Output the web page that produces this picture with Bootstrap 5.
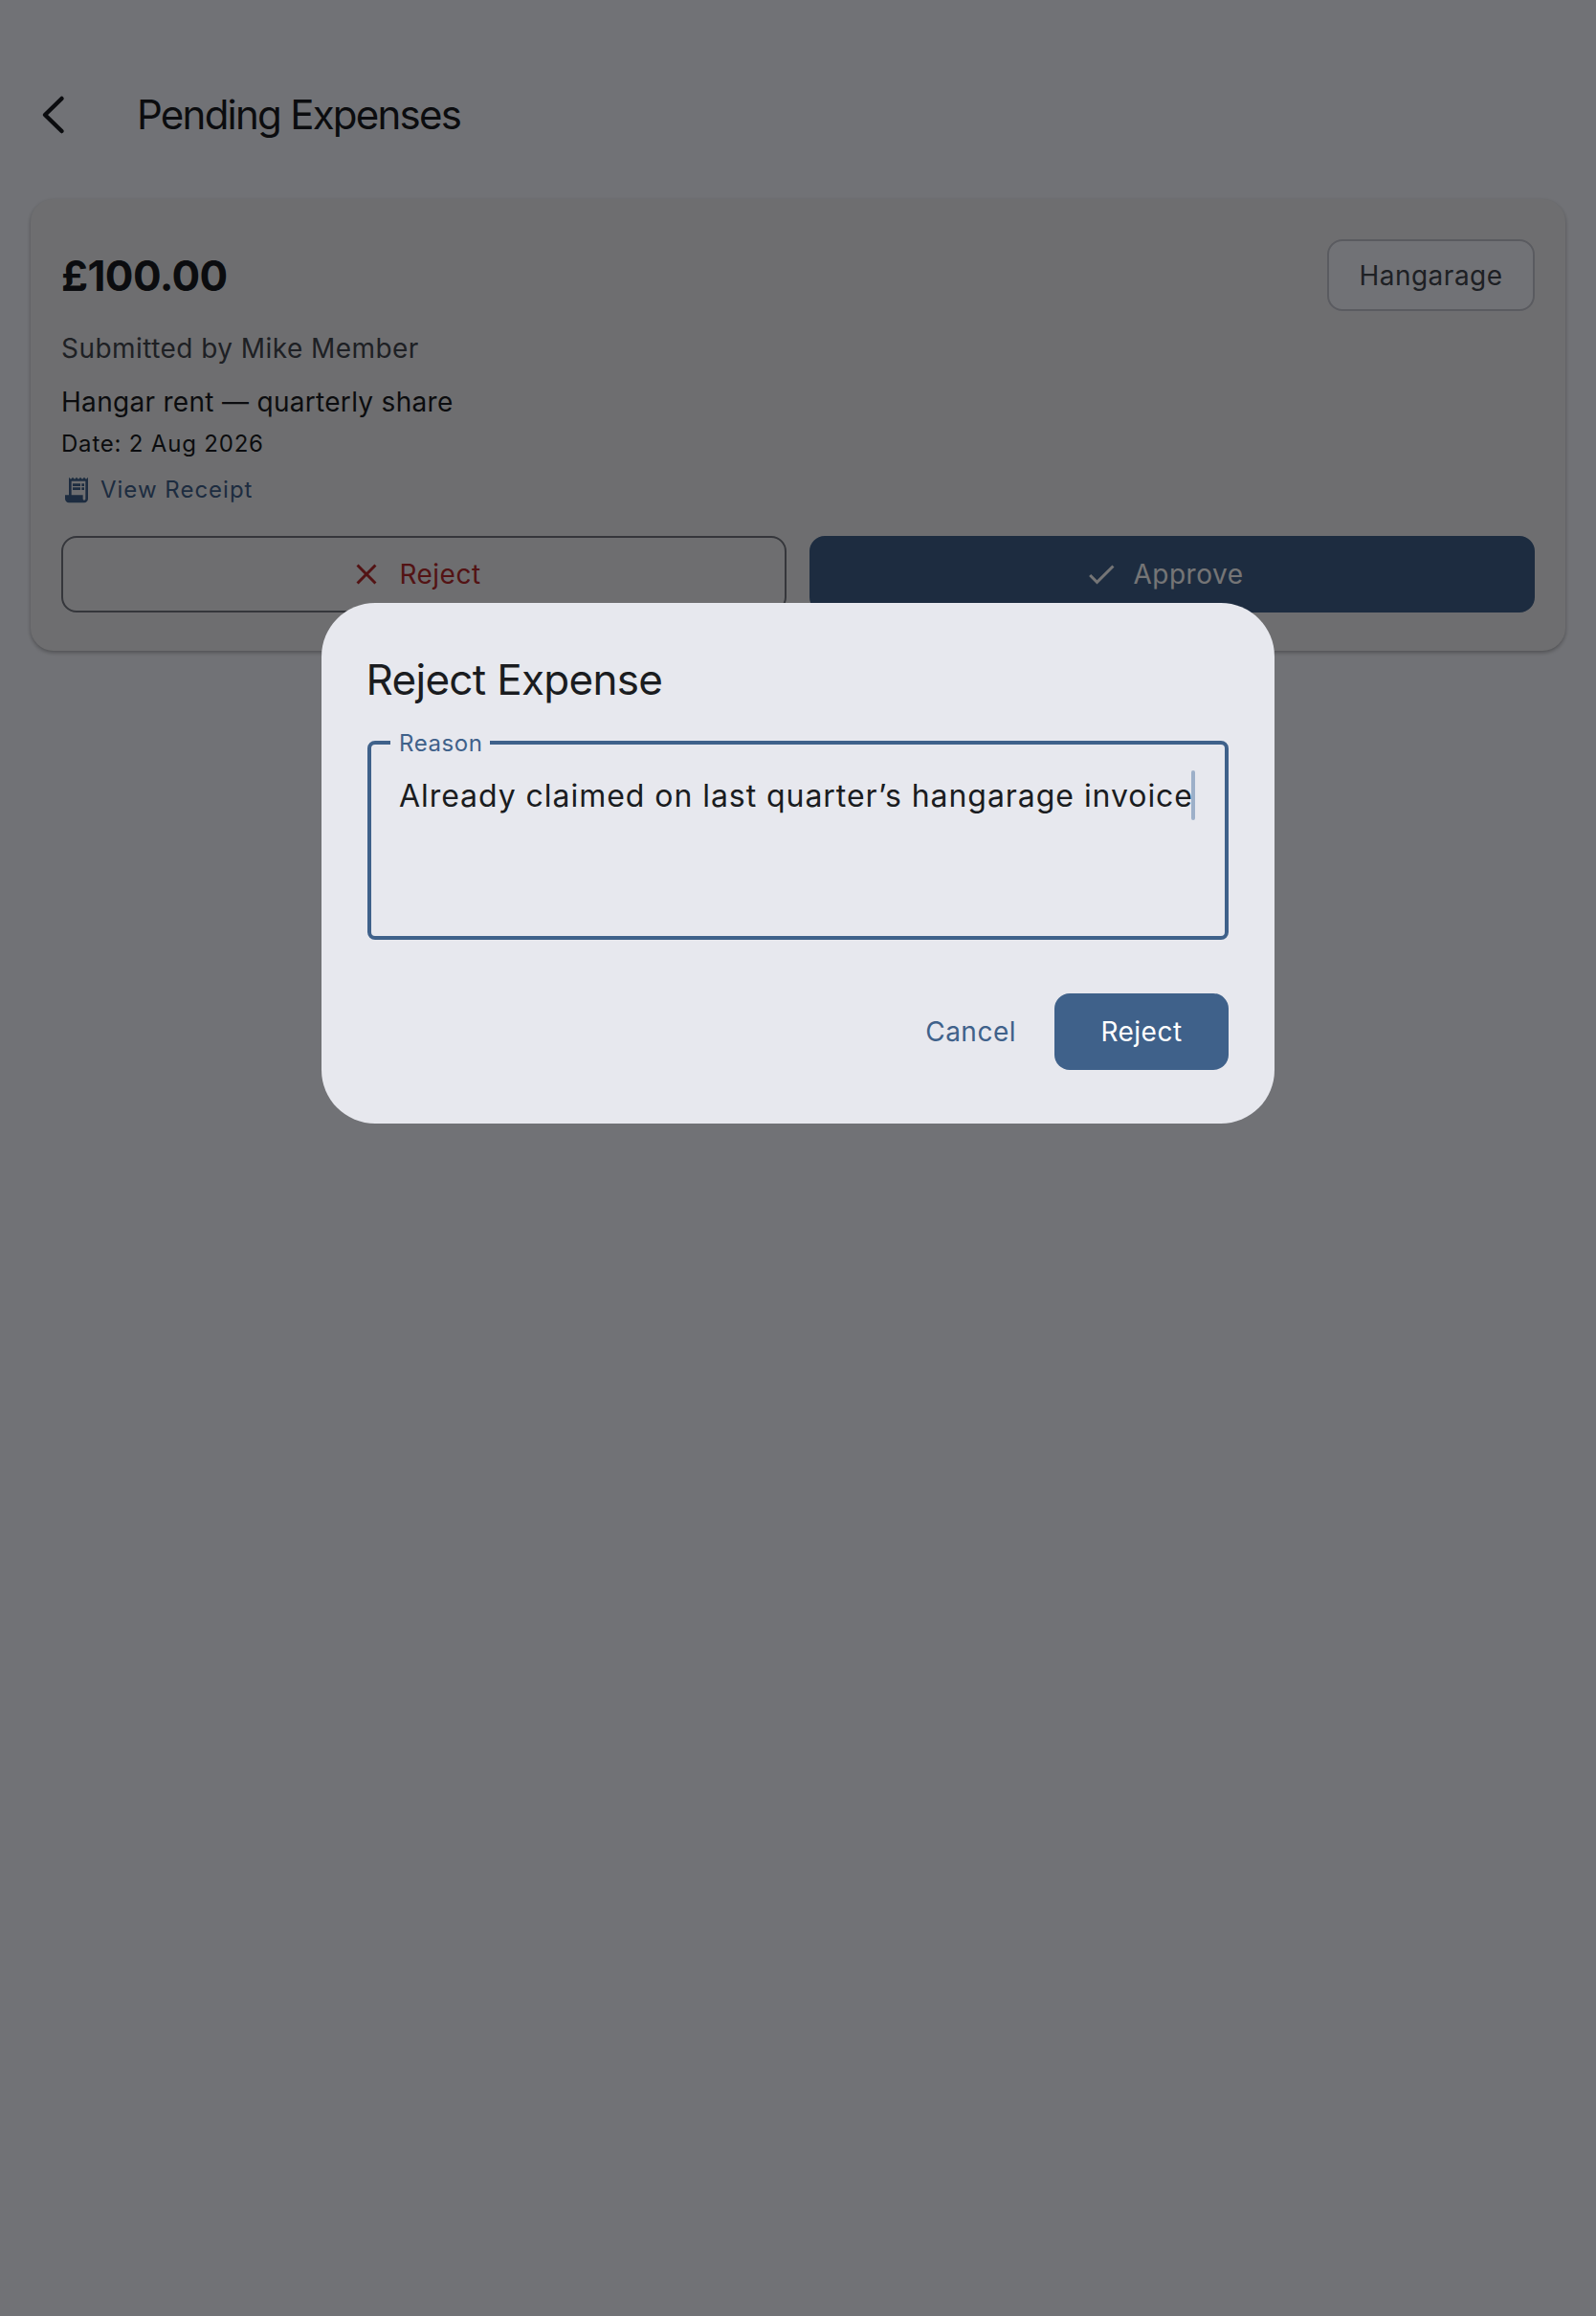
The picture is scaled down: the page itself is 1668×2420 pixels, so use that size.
<!DOCTYPE html>
<html lang="en">
<head>
<meta charset="utf-8">
<title>Pending Expenses</title>
<link rel="stylesheet" href="https://cdn.jsdelivr.net/npm/bootstrap@5.3.0/dist/css/bootstrap.min.css">
<style>
html,body{height:100%}
body{background:#f7f9ff;font-family:Inter,"Liberation Sans",sans-serif;color:#1a1c20;position:relative;overflow:hidden}
.top-bar{height:208px;padding:98px 0 0 34px}
.back-btn{width:44px;height:44px;padding:0;border:0;background:none;color:#1a1c20;line-height:0}
.top-title{font-size:42px;font-weight:400;line-height:44px;margin:0 0 0 65px;letter-spacing:-1.75px}
.exp-card{margin:0 32px;height:472px;padding:42px 32px 0;background:#f0f0f1;border:0;border-radius:24px;box-shadow:0 2px 4px rgba(0,0,0,.3)}
.amount{font-size:44px;font-weight:700;line-height:56px;margin:0;letter-spacing:-.6px}
.tag-chip{height:75px;width:217px;border:2px solid #c4c6cf;border-radius:16px;font-size:28px;letter-spacing:.5px;color:#43474e;background:#f7f9ff}
.sub-text{font-size:28px;line-height:40px;color:#43474e;letter-spacing:.45px;margin-top:19px}
.desc-text{font-size:28px;line-height:40px;letter-spacing:.3px;margin-top:16px}
.date-text{font-size:24px;line-height:32px;letter-spacing:.8px}
.receipt-link{font-size:24px;line-height:32px;color:#3f618a;letter-spacing:1px;text-decoration:none;gap:9px}
.act-row{margin-top:32px}
.act-btn{height:80px;flex:1 1 0;border-radius:16px;font-size:28px;letter-spacing:.5px;padding:0 18px 0 0}
.act-reject{background:transparent;border:2px solid #73777f;color:#b52a2a}
.act-approve{background:#3f618a;border:2px solid #3f618a;color:#fff}
.scrim{position:absolute;inset:0;background:rgba(0,0,2,.54);padding-top:630px}
.dlg{width:996px;height:544px;background:#e7e8ee;border-radius:56px;padding:48px}
.dlg-title{font-size:44px;font-weight:400;line-height:64px;margin:0 0 0 -1.5px;letter-spacing:-.7px}
.reason-box{height:208px;margin:32px 0 0;border:4px solid #3f618a;border-radius:8px;padding:0 32px;min-width:0}
.reason-box legend{float:none;width:auto;margin:0 0 0 -12px;padding:0 7px 0 9px;font-size:24px;line-height:4px;color:#3f618a;letter-spacing:.6px}
.reason-box legend span{display:block;transform:translateY(1px)}
.reason-text{font-size:32px;line-height:48px;letter-spacing:.95px;padding-top:27px;white-space:nowrap;margin-left:-3px}
.caret-bar{display:inline-block;width:4px;height:52px;margin-left:-2px;background:#9db0c9;vertical-align:-14px;border-radius:2px}
.footer-row{gap:40px;margin-top:56px}
.btn-cancel{font-size:28px;letter-spacing:.5px;color:#3f618a;background:none;border:0;padding:0;height:80px}
.btn-confirm{width:182px;height:80px;background:#3f618a;color:#fff;border:0;border-radius:16px;font-size:28px;letter-spacing:.5px}
</style>
</head>
<body>
<header class="top-bar d-flex align-items-start">
  <button class="back-btn" aria-label="Back"><svg width="44" height="44" viewBox="0 0 44 44" fill="none" stroke="currentColor" stroke-width="4.5" stroke-linecap="round" stroke-linejoin="round"><path d="M30.5 5 13 22l17.5 17"/></svg></button>
  <h1 class="top-title">Pending Expenses</h1>
</header>
<main class="card exp-card">
  <div class="d-flex justify-content-between align-items-center">
    <p class="amount">£100.00</p>
    <button class="tag-chip">Hangarage</button>
  </div>
  <div class="sub-text">Submitted by Mike Member</div>
  <div class="desc-text">Hangar rent — quarterly share</div>
  <div class="date-text mt-2">Date: 2 Aug 2026</div>
  <a class="receipt-link d-flex align-items-center mt-3" href="#"><svg width="32" height="32" viewBox="0 0 24 24" fill="currentColor"><path d="M19.5 3.5 18 2l-1.5 1.5L15 2l-1.5 1.5L12 2l-1.5 1.5L9 2 7.5 3.5 6 2v14H3v3c0 1.66 1.34 3 3 3h12c1.66 0 3-1.34 3-3V2l-1.5 1.5zM19 19c0 .55-.45 1-1 1s-1-.45-1-1v-3H8V5h11v14z"/><path d="M9 7h6v2H9zm7 0h2v2h-2zM9 10h6v2H9zm7 0h2v2h-2z"/></svg>View Receipt</a>
  <div class="d-flex gap-4 act-row">
    <button class="act-btn act-reject d-flex align-items-center justify-content-center gap-3"><svg width="36" height="36" viewBox="0 0 24 24" fill="currentColor"><path d="M19 6.41 17.59 5 12 10.59 6.41 5 5 6.41 10.59 12 5 17.59 6.41 19 12 13.41 17.59 19 19 17.59 13.41 12z"/></svg>Reject</button>
    <button class="act-btn act-approve d-flex align-items-center justify-content-center gap-3"><svg width="36" height="36" viewBox="0 0 24 24" fill="currentColor"><path d="M9 16.17 4.83 12l-1.42 1.41L9 19 21 7l-1.41-1.41z"/></svg>Approve</button>
  </div>
</main>
<div class="scrim d-flex justify-content-center align-items-start">
  <section class="dlg">
    <h2 class="dlg-title">Reject Expense</h2>
    <fieldset class="reason-box">
      <legend><span>Reason</span></legend>
      <div class="reason-text">Already claimed on last quarter’s hangarage invoice<span class="caret-bar"></span></div>
    </fieldset>
    <div class="d-flex justify-content-end align-items-center footer-row">
      <button class="btn-cancel">Cancel</button>
      <button class="btn-confirm">Reject</button>
    </div>
  </section>
</div>
<script src="https://cdn.jsdelivr.net/npm/bootstrap@5.3.0/dist/js/bootstrap.bundle.min.js"></script>
</body>
</html>
